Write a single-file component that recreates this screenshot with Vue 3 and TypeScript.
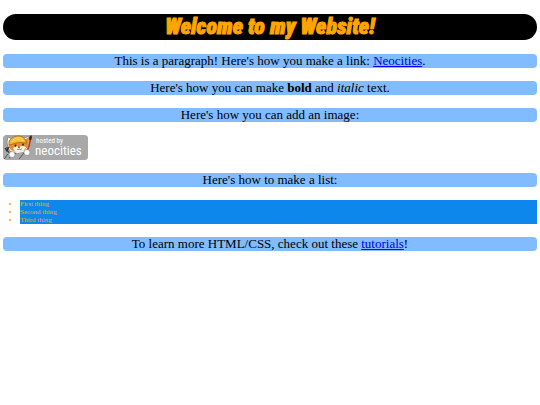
<script setup lang="ts">
const things: string[] = ['First thing', 'Second thing', 'Third thing']
</script>

<template>
  <main class="page">
    <h1 class="title">Welcome to my Website!</h1>

    <p class="bar">This is a paragraph! Here's how you make a link: <a href="#neocities">Neocities</a>.</p>
    <p class="bar">Here's how you can make <strong>bold</strong> and <em>italic</em> text.</p>
    <p class="bar">Here's how you can add an image:</p>

    <svg class="badge" viewBox="0 0 85 25" role="img" aria-label="Hosted by Neocities">
      <rect width="85" height="25" rx="3.5" fill="#a8a8a8" />
      <!-- cat -->
      <path d="M5 13L4 7L5 2L9 4Q15-1 21 3L27 1L26.5 9Q26 15 22 17Q14 20 8 17Z" fill="#fff" stroke="#666" stroke-width=".6" />
      <path d="M5.5 12L6 5L10 6L21 5L26 2L25.5 11L22 15Q13 18 8 15Z" fill="#e58a35" />
      <path d="M6 7Q8 1 15 1Q21 1 23 6L24 8Q16 6 6 10Z" fill="#f3b52b" stroke="#8a5b1c" stroke-width=".6" />
      <path d="M8 7Q14 3 21 6M10 5Q15 1 20 4" fill="none" stroke="#ffe173" stroke-width=".8" />
      <path d="M10 13Q13 10 16 12Q19 10 23 12Q22 16 16 17Q11 17 10 13Z" fill="#fff3dd" />
      <ellipse cx="12.5" cy="10.6" rx=".8" ry="1.2" fill="#28221f" />
      <ellipse cx="20" cy="9.6" rx=".8" ry="1.2" fill="#28221f" />
      <path d="M15 12H17L16 13ZM14 14Q15 15.5 16 14Q18 15.5 19 13.5" fill="none" stroke="#513326" stroke-width=".6" />
      <!-- fork, brush and paws -->
      <path d="M2 13L4 16L6 12M4 12V15L8 20" fill="none" stroke="#39342f" stroke-width="1.2" />
      <path d="M27.5 4L26 11L23 18" fill="none" stroke="#a53e28" stroke-width="1.5" />
      <path d="M26.5 5Q25 2 28.5 0Q29.5 3 28 5Z" fill="#33231c" />
      <path d="M1 24L5 19M6 23L13 18M21 18L16 24" fill="none" stroke="#555" stroke-width="1" />
      <circle cx="9" cy="19.5" r="3" fill="#fff" stroke="#666" stroke-width=".5" />
      <circle cx="24" cy="17.5" r="3" fill="#fff" stroke="#666" stroke-width=".5" />
      <text class="hosted" x="33" y="8">hosted by</text>
      <text class="brand" x="32" y="20">neocities</text>
    </svg>

    <p class="bar">Here's how to make a list:</p>

    <ul class="list">
      <li v-for="thing in things" :key="thing">{{ thing }}</li>
    </ul>

    <p class="bar">To learn more HTML/CSS, check out these <a href="#tutorials">tutorials</a>!</p>
  </main>
</template>

<style>
body {
  background: #fff;
}
</style>

<style scoped>
.page {
  display: flex;
  flex-direction: column;
  gap: 13px;
  padding: 14px 3px;
  color: #000;
  font-family: "Liberation Serif", "Times New Roman", serif;
}

.title {
  margin: 0 0 1px;
  border-radius: 13px;
  background: #000;
  color: orange;
  font: italic 900 22px/26px Impact, "Roboto Condensed", Lato, sans-serif;
  text-align: center;
  -webkit-text-stroke: 1px orange;
}

.bar {
  margin: 0;
  border-radius: 4px;
  background: #80bcff;
  font-size: 13px;
  line-height: 14px;
  text-align: center;
}

.bar a {
  color: #0000ee;
}

.badge {
  display: block;
  width: 85px;
  height: 25px;
}

.hosted,
.brand {
  fill: #fff;
  font-family: "Roboto Condensed", Lato, sans-serif;
}

.hosted {
  font-size: 7px;
}

.brand {
  font-size: 13px;
}

.list {
  margin: 0;
  padding: 0 0 0 17px;
  color: orange;
  font-size: 7px;
  line-height: 8px;
}

.list li {
  background: #0d87ec;
}
</style>
